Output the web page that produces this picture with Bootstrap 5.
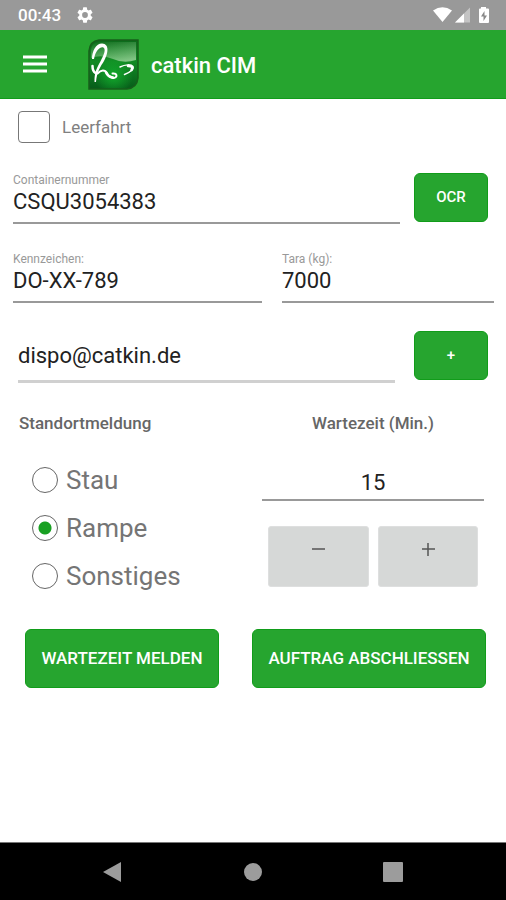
<!DOCTYPE html>
<html lang="de">
<head>
<meta charset="utf-8">
<meta name="viewport" content="width=device-width, initial-scale=1">
<title>catkin CIM</title>
<link href="https://cdn.jsdelivr.net/npm/bootstrap@5.3.0/dist/css/bootstrap.min.css" rel="stylesheet">
<style>
  :root { --brand: #26a52f; --brand-edge: #119c1a; }
  body { font-family: Roboto, "Liberation Sans", sans-serif; color: #222; background: #fff; }
  .status-strip { height: 30px; background: #999; font-size: 17px; line-height: 30px; padding: 0 16px 0 18px; }
  .app-header { height: 69px; background: var(--brand); border-bottom: 1px solid var(--brand-edge); padding: 0 23px; }
  .app-title { font-size: 22px; line-height: 28px; padding: 4px 0 0 12px; }
  .menu-button { width: 24px; height: 24px; margin-right: 41px; }
  .form-area { padding: 0 12px 0 13px; }

  .empty-run { padding: 12px 5px 0; gap: 12px; font-size: 17px; line-height: 31px; color: #808080; }
  .empty-run .form-check-input { width: 32px; height: 32px; border: 1px solid #777; border-radius: 4px; }

  .field-row { padding-right: 6px; gap: 14px; }
  .field-row-first { margin-top: 30px; }
  .field-label { font-size: 12px; line-height: 14px; color: #999; }
  .line-input { border: 0; border-bottom: 2px solid #999; border-radius: 0; padding: 0 0 7px; font-size: 22px; line-height: 28px; height: 37px; color: #222; background: transparent; }
  .pair-row { display: grid; grid-template-columns: 249fr 212fr; gap: 20px; margin-top: 28px; }
  .mail-row { margin-top: 28px; }
  .mail-box { padding: 0 5px; }
  .mail-box .line-input { height: 52px; padding: 0; border-bottom: 3px solid #d0d0d0; }

  .btn-brand { --bs-btn-color: #fff; --bs-btn-bg: var(--brand); --bs-btn-border-color: var(--brand-edge);
    --bs-btn-hover-color: #fff; --bs-btn-hover-bg: var(--brand-edge); --bs-btn-hover-border-color: var(--brand-edge);
    --bs-btn-border-radius: 6px; --bs-btn-font-weight: 500; --bs-btn-font-size: 17px; }
  .btn-side { --bs-btn-font-size: 15px; --bs-btn-padding-x: 0; width: 74px; height: 49px; }
  .btn-action { height: 59px; --bs-btn-padding-x: 0; }

  .report-row { display: grid; grid-template-columns: 223fr 222fr; gap: 20px; padding: 0 10px 0 6px; margin-top: 28px; }
  .group-title { font-size: 17px; line-height: 24px; font-weight: 500; color: #666; margin: 0; }
  .option-list { padding: 21px 0 0 13px; }
  .option-line { height: 48px; gap: 8px; font-size: 26px; line-height: 32px; color: #757575; }
  .option-line .form-check-input { width: 26px; height: 26px; border: 1px solid #666; }
  .option-line .form-check-input:checked { background: radial-gradient(circle, #18a022 6px, #fff 7px); border-color: #666; }
  .wait-input { height: 34px; margin-top: 32px; padding: 0 0 2px; }
  .stepper { padding: 25px 6px 0; gap: 9px; }
  .btn-step { height: 61px; background: #d6d8d7; border: 1px solid #dedfdf; border-radius: 3px; padding: 0 0 16px; color: #555; }
  .btn-step:hover { background: #c8caca; }
  .action-row { display: grid; grid-template-columns: 194fr 234fr; gap: 33px; padding: 0 8px 0 12px; margin-top: 29px; }

  .system-bar { height: 58px; background: #000; border-top: 1px solid #777; gap: 116px; }
  .system-bar button { width: 24px; height: 24px; }
</style>
<script src="https://cdn.jsdelivr.net/npm/bootstrap@5.3.0/dist/js/bootstrap.bundle.min.js"></script>
</head>
<body class="d-flex flex-column min-vh-100">

<div class="status-strip d-flex align-items-center text-white fw-medium">
  <span>00:43</span>
  <svg class="ms-3" width="16" height="16" viewBox="2 2 20 20" fill="#fff" aria-hidden="true"><path d="M19.14 12.94c.04-.3.06-.61.06-.94s-.02-.64-.07-.94l2.03-1.58a.49.49 0 0 0 .12-.61l-1.92-3.32a.49.49 0 0 0-.59-.22l-2.39.96a7 7 0 0 0-1.62-.94l-.36-2.54a.48.48 0 0 0-.48-.41h-3.84a.48.48 0 0 0-.47.41l-.36 2.54a7 7 0 0 0-1.62.94l-2.39-.96a.48.48 0 0 0-.59.22L2.74 8.87a.48.48 0 0 0 .12.61l2.03 1.58a7 7 0 0 0 0 1.88l-2.03 1.58a.49.49 0 0 0-.12.61l1.92 3.32c.12.22.37.29.59.22l2.39-.96c.5.38 1.03.7 1.62.94l.36 2.54c.05.24.24.41.48.41h3.84c.24 0 .44-.17.47-.41l.36-2.54a7 7 0 0 0 1.62-.94l2.39.96c.22.08.47 0 .59-.22l1.92-3.32a.48.48 0 0 0-.12-.61zM12 15.6a3.6 3.6 0 1 1 0-7.2 3.6 3.6 0 0 1 0 7.2z"/></svg>
  <svg class="ms-auto" width="57" height="18" viewBox="0 0 57 18" aria-hidden="true">
    <path d="M0 4.500Q9.500-2 19 4.500L9.500 16z" fill="#fff"/>
    <path d="M37 1.500V16.500H22z" fill="#c4c4c4"/><path d="M31 7.500V16.500H22z" fill="#fff"/>
    <path d="M48 2.500V1h5v1.500h2q1 0 1 1V16q0 1-1 1h-8q-1 0-1-1V3.500q0-1 1-1z" fill="#fff"/>
    <path d="M51.500 5l-3.500 5.500h2.500V15l3.500-5.500h-2.500z" fill="#888"/>
  </svg>
</div>

<header class="app-header d-flex align-items-center text-white">
  <button class="menu-button btn p-0 border-0 d-flex flex-shrink-0" type="button" aria-label="Menü">
    <svg width="24" height="24" viewBox="0 0 24 24" stroke="#fff" stroke-width="3" aria-hidden="true"><path d="M0 5H24M0 12H24M0 19H24"/></svg>
  </button>
  <svg class="flex-shrink-0" width="51" height="51" viewBox="0 0 51 51" aria-hidden="true">
    <defs>
      <linearGradient id="tile" x1="0" y1="0" x2="0" y2="1"><stop offset="0" stop-color="#0d6a1b"/><stop offset=".45" stop-color="#128a24"/><stop offset="1" stop-color="#075c1a"/></linearGradient>
      <linearGradient id="shine" x1=".2" y1="0" x2=".6" y2="1"><stop offset="0" stop-color="#8fcf90" stop-opacity=".05"/><stop offset="1" stop-color="#a5d8a3" stop-opacity=".75"/></linearGradient>
      <radialGradient id="glow" cx=".5" cy=".72" r=".4"><stop offset="0" stop-color="#12a82c"/><stop offset="1" stop-color="#12a82c" stop-opacity="0"/></radialGradient>
    </defs>
    <path d="M11 1H50V39Q49 49 39 50H1V12Q2 2 11 1z" fill="url(#tile)"/>
    <path d="M11 1H50V39Q49 49 39 50H1V12Q2 2 11 1z" fill="url(#glow)"/>
    <path d="M11 3H48V21Q36 25 25 20Q13 15 3 19V12Q3 4 11 3z" fill="url(#shine)"/>
    <path d="M11 1H50V39Q49 49 39 50H1V12Q2 2 11 1z" fill="none" stroke="#175f1b" stroke-width="1.500"/>
    <path d="M4 20C4 12 8 4.500 14 4.500C22 5 20 15 16 22C13 27 9 32 8 43L6.500 43C6.500 35 7.500 32 10 27C13 21 17.500 14 16.500 10C15 5.500 7.500 10 6 20z" fill="#fff"/>
    <g fill="none" stroke="#fff" stroke-linecap="round" stroke-linejoin="round">
      <path d="M4.500 27C4.500 30 6 33 7.500 34" stroke-width="2.500"/>
      <path d="M9.500 34.500C13 30.500 17 30.500 19 34C21 39 27.500 40.500 28.500 37Q28.500 34 24.500 34.500" stroke-width="2"/>
      <path d="M18 33.500Q20 38 25 38.500" stroke-width="2.500"/>
      <path d="M32 28C37 25.500 43 25 45 27.500C46 30 42 33.500 36.500 35.500" stroke-width="1.500"/>
      <path d="M40 27Q46 27 43.500 31" stroke-width="2.500"/>
    </g>
  </svg>
  <h1 class="app-title fw-medium mb-0">catkin CIM</h1>
</header>

<main class="flex-grow-1">
  <form class="form-area">
    <div class="empty-run d-flex align-items-center">
      <input class="form-check-input m-0 flex-shrink-0" type="checkbox" id="leerfahrt">
      <label for="leerfahrt">Leerfahrt</label>
    </div>

    <div class="field-row field-row-first d-flex align-items-start">
      <div class="flex-grow-1">
        <label class="field-label d-block" for="container">Containernummer</label>
        <input class="line-input form-control" id="container" type="text" value="CSQU3054383">
      </div>
      <button class="btn btn-brand btn-side flex-shrink-0" type="button">OCR</button>
    </div>

    <div class="pair-row">
      <div>
        <label class="field-label d-block" for="kennzeichen">Kennzeichen:</label>
        <input class="line-input form-control" id="kennzeichen" type="text" value="DO-XX-789">
      </div>
      <div>
        <label class="field-label d-block" for="tara">Tara (kg):</label>
        <input class="line-input form-control" id="tara" type="text" inputmode="numeric" value="7000">
      </div>
    </div>

    <div class="field-row mail-row d-flex align-items-start">
      <div class="mail-box flex-grow-1">
        <input class="line-input form-control" type="email" aria-label="E-Mail" value="dispo@catkin.de">
      </div>
      <button class="btn btn-brand btn-side flex-shrink-0" type="button" aria-label="E-Mail hinzufügen">+</button>
    </div>

    <div class="report-row">
      <div role="radiogroup" aria-labelledby="standort">
        <h2 class="group-title" id="standort">Standortmeldung</h2>
        <div class="option-list">
          <div class="option-line d-flex align-items-center">
            <input class="form-check-input m-0" type="radio" name="ort" id="stau"><label for="stau">Stau</label>
          </div>
          <div class="option-line d-flex align-items-center">
            <input class="form-check-input m-0" type="radio" name="ort" id="rampe" checked><label for="rampe">Rampe</label>
          </div>
          <div class="option-line d-flex align-items-center">
            <input class="form-check-input m-0" type="radio" name="ort" id="sonstiges"><label for="sonstiges">Sonstiges</label>
          </div>
        </div>
      </div>
      <div>
        <label class="group-title d-block text-center" for="wartezeit">Wartezeit (Min.)</label>
        <input class="line-input wait-input form-control text-center" id="wartezeit" type="text" inputmode="numeric" value="15">
        <div class="stepper d-flex">
          <button class="btn btn-step flex-fill d-flex align-items-center justify-content-center" type="button" aria-label="Weniger">
            <svg width="14" height="14" viewBox="0 0 14 14" stroke="#555" stroke-width="1.500" aria-hidden="true"><path d="M1 7H14"/></svg>
          </button>
          <button class="btn btn-step flex-fill d-flex align-items-center justify-content-center" type="button" aria-label="Mehr">
            <svg width="14" height="14" viewBox="0 0 14 14" stroke="#555" stroke-width="1.500" aria-hidden="true"><path d="M1 7H14M7 1V14"/></svg>
          </button>
        </div>
      </div>
    </div>

    <div class="action-row">
      <button class="btn btn-brand btn-action text-nowrap" type="button">WARTEZEIT MELDEN</button>
      <button class="btn btn-brand btn-action text-nowrap" type="button">AUFTRAG ABSCHLIESSEN</button>
    </div>
  </form>
</main>

<nav class="system-bar d-flex align-items-center justify-content-center" aria-label="System">
  <button class="btn p-0 border-0 d-flex" type="button" aria-label="Zurück"><svg width="24" height="24" viewBox="0 0 24 24" fill="#9c9c9c" aria-hidden="true"><path d="M2 12L20 2V22z"/></svg></button>
  <button class="btn p-0 border-0 d-flex" type="button" aria-label="Startseite"><svg width="24" height="24" viewBox="0 0 24 24" fill="#9c9c9c" aria-hidden="true"><circle cx="12" cy="12" r="9"/></svg></button>
  <button class="btn p-0 border-0 d-flex" type="button" aria-label="Übersicht"><svg width="24" height="24" viewBox="0 0 24 24" fill="#9c9c9c" aria-hidden="true"><rect x="2" y="2" width="20" height="20" rx="1"/></svg></button>
</nav>
</body>
</html>
